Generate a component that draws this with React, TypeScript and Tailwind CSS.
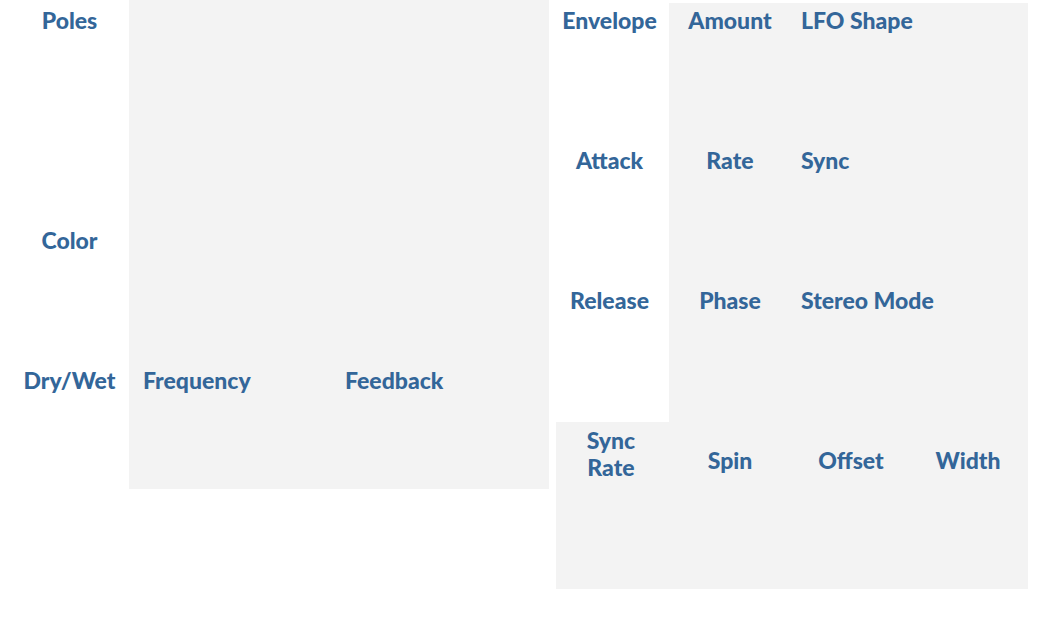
import type { ReactNode } from "react";

function Label({ children }: { children: ReactNode }) {
  return <h2 className="whitespace-nowrap">{children}</h2>;
}

export default function App() {
  return (
    <main className="grid min-h-screen grid-cols-[129fr_420fr_491fr] items-start bg-white font-['Lato_Black','Lato',sans-serif] text-[23px] leading-[27px] font-black text-[#336699]">
      <section className="grid grid-rows-[220px_140px_129px] pt-[7px] pl-2.5 text-center">
        <Label>Poles</Label>
        <Label>Color</Label>
        <Label>Dry/Wet</Label>
      </section>

      <section className="grid grid-cols-[202fr_204fr] bg-[#f3f3f3] pt-[367px] pb-[95px] pl-3.5">
        <Label>Frequency</Label>
        <Label>Feedback</Label>
      </section>

      <section className="pr-3 pl-[7px]">
        <div className="grid grid-cols-[113fr_359fr]">
          <div className="grid grid-rows-[140px_140px_135px] pt-[7px] pr-1.5 text-center">
            <Label>Envelope</Label>
            <Label>Attack</Label>
            <Label>Release</Label>
          </div>
          <div className="mt-[3px] grid grid-cols-[122fr_237fr] grid-rows-[140px_140px_135px] bg-[#f3f3f3] pt-1">
            <div className="text-center">
              <Label>Amount</Label>
            </div>
            <div className="pl-2.5">
              <Label>LFO Shape</Label>
            </div>
            <div className="text-center">
              <Label>Rate</Label>
            </div>
            <div className="pl-2.5">
              <Label>Sync</Label>
            </div>
            <div className="text-center">
              <Label>Phase</Label>
            </div>
            <div className="pl-2.5">
              <Label>Stereo Mode</Label>
            </div>
          </div>
        </div>
        <div className="grid h-[167px] grid-cols-[110fr_128fr_114fr_120fr] items-start bg-[#f3f3f3] pt-[5px] text-center">
          <h2>
            Sync
            <br />
            Rate
          </h2>
          <div className="pt-5">
            <Label>Spin</Label>
          </div>
          <div className="pt-5">
            <Label>Offset</Label>
          </div>
          <div className="pt-5">
            <Label>Width</Label>
          </div>
        </div>
      </section>
    </main>
  );
}
